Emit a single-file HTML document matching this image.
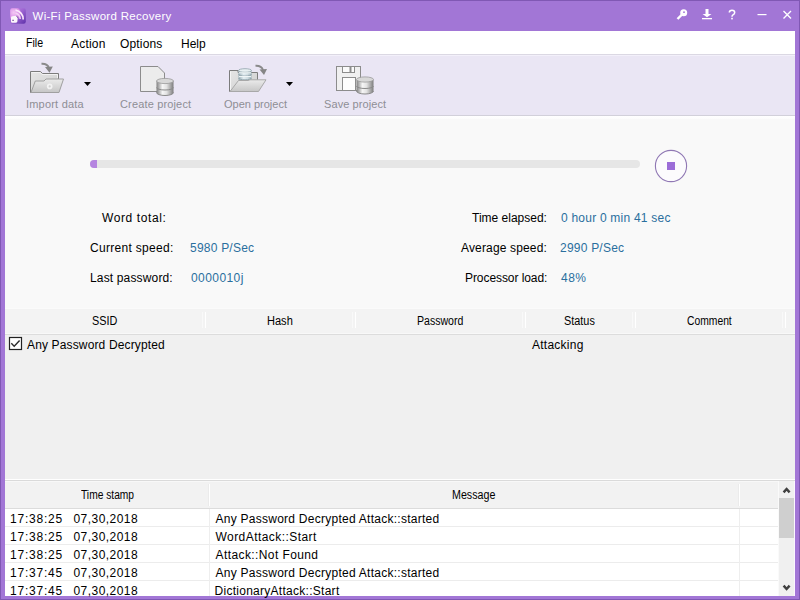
<!DOCTYPE html>
<html><head><meta charset="utf-8">
<style>
*{margin:0;padding:0;box-sizing:border-box}
html,body{width:800px;height:600px;overflow:hidden}
body{background:#a276d6;font-family:"Liberation Sans",sans-serif;font-size:12px;color:#000;position:relative}
.a{position:absolute}
.t{position:absolute;white-space:pre;line-height:14px}
</style></head><body>
<div class="a" style="left:0;top:0;width:800px;height:1px;background:#8058b4"></div>
<div class="a" style="left:0;top:0;width:1px;height:600px;background:#8058b4"></div>
<div class="a" style="left:799px;top:0;width:1px;height:600px;background:#8058b4"></div>
<div class="a" style="left:0;top:599px;width:800px;height:1px;background:#8058b4"></div>
<!-- menu -->
<div class="a" style="left:5px;top:31px;width:790px;height:23px;background:#fff"></div>
<div class="a" style="left:5px;top:54px;width:790px;height:1px;background:#dbd8e3"></div>
<!-- toolbar -->
<div class="a" style="left:5px;top:55px;width:790px;height:60px;background:#eae6f4"></div>
<div class="a" style="left:5px;top:55px;width:790px;height:1px;background:#f3f0fa"></div>
<div class="a" style="left:5px;top:115px;width:790px;height:1px;background:#d2d0da"></div>
<!-- panel -->
<div class="a" style="left:5px;top:116px;width:790px;height:192px;background:#f9f9f9"></div>
<div class="a" style="left:5px;top:116px;width:790px;height:3px;background:linear-gradient(#fff,#fcfcfc)"></div>
<div class="a" style="left:90px;top:160px;width:550px;height:8px;border-radius:4px;background:#e6e6e6"></div>
<div class="a" style="left:90px;top:160px;width:7px;height:8px;border-radius:4px 0 0 4px;background:#b585e0"></div>
<!-- list -->
<div class="a" style="left:5px;top:308px;width:790px;height:26px;background:#f3f3f3"></div>
<div class="a" style="left:5px;top:308px;width:790px;height:1px;background:#fbfbfb"></div>
<div class="a" style="left:5px;top:333px;width:790px;height:1px;background:#f8f8f8"></div>
<div class="a" style="left:5px;top:334px;width:790px;height:1px;background:#dcdcdc"></div>
<div class="a" style="left:5px;top:335px;width:790px;height:145px;background:#f0f0f0"></div>
<div class="a" style="left:205px;top:312px;width:1px;height:16px;background:#fff"></div><div class="a" style="left:202px;top:312px;width:1px;height:16px;background:#f9f9f9"></div>
<div class="a" style="left:355px;top:312px;width:1px;height:16px;background:#fff"></div><div class="a" style="left:352px;top:312px;width:1px;height:16px;background:#f9f9f9"></div>
<div class="a" style="left:525px;top:312px;width:1px;height:16px;background:#fff"></div><div class="a" style="left:522px;top:312px;width:1px;height:16px;background:#f9f9f9"></div>
<div class="a" style="left:635px;top:312px;width:1px;height:16px;background:#fff"></div><div class="a" style="left:632px;top:312px;width:1px;height:16px;background:#f9f9f9"></div>
<div class="a" style="left:785px;top:312px;width:1px;height:16px;background:#fff"></div><div class="a" style="left:782px;top:312px;width:1px;height:16px;background:#f9f9f9"></div>
<!-- log -->
<div class="a" style="left:5px;top:479px;width:790px;height:1px;background:#fff"></div>
<div class="a" style="left:5px;top:480px;width:790px;height:1px;background:#dadada"></div>
<div class="a" style="left:5px;top:481px;width:774px;height:27px;background:#f2f2f2"></div>
<div class="a" style="left:5px;top:481px;width:774px;height:1px;background:#f8f8f8"></div>
<div class="a" style="left:5px;top:508px;width:774px;height:1px;background:#dcdcdc"></div>
<div class="a" style="left:5px;top:509px;width:774px;height:87px;background:#fff"></div>
<div class="a" style="left:5px;top:526px;width:774px;height:1px;background:#ececec"></div>
<div class="a" style="left:5px;top:544px;width:774px;height:1px;background:#ececec"></div>
<div class="a" style="left:5px;top:562px;width:774px;height:1px;background:#ececec"></div>
<div class="a" style="left:5px;top:580px;width:774px;height:1px;background:#ececec"></div>
<div class="a" style="left:209px;top:484px;width:1px;height:22px;background:#fff"></div>
<div class="a" style="left:208px;top:484px;width:1px;height:22px;background:#ebebeb"></div>
<div class="a" style="left:209px;top:509px;width:1px;height:87px;background:#eeeeee"></div>
<div class="a" style="left:739px;top:484px;width:1px;height:22px;background:#fff"></div>
<div class="a" style="left:738px;top:484px;width:1px;height:22px;background:#ebebeb"></div>
<div class="a" style="left:739px;top:509px;width:1px;height:87px;background:#eeeeee"></div>
<div class="a" style="left:779px;top:481px;width:15px;height:115px;background:#f0f0f0"></div>
<div class="a" style="left:794px;top:481px;width:1px;height:115px;background:#fbf6ff"></div>
<div class="a" style="left:778px;top:481px;width:1px;height:115px;background:#fafafa"></div>
<div class="a" style="left:779px;top:498px;width:15px;height:40px;background:#cfcfcf"></div>
<svg class="a" style="left:0;top:0" width="800" height="600" viewBox="0 0 800 600">
<defs>
<linearGradient id="ig2" x1="0" y1="0" x2="1" y2="1"><stop offset="0" stop-color="#c890e8"/><stop offset="0.5" stop-color="#9a62d0"/><stop offset="1" stop-color="#5c30a8"/></linearGradient><radialGradient id="ig3" cx="0.45" cy="0.4" r="0.6"><stop offset="0" stop-color="#f4c8f4"/><stop offset="0.7" stop-color="#d88ee6"/><stop offset="1" stop-color="#b070d8" stop-opacity="0"/></radialGradient>
<linearGradient id="fb" x1="0" y1="0" x2="1" y2="1"><stop offset="0" stop-color="#e6e6e6"/><stop offset="1" stop-color="#cdcdcd"/></linearGradient>
<linearGradient id="ff" x1="0" y1="0" x2="0" y2="1"><stop offset="0" stop-color="#ebebeb"/><stop offset="1" stop-color="#c6c6c6"/></linearGradient>
<linearGradient id="db" x1="0" y1="0" x2="1" y2="0"><stop offset="0" stop-color="#808080"/><stop offset="0.35" stop-color="#f6f6f6"/><stop offset="0.6" stop-color="#e2e2e2"/><stop offset="1" stop-color="#7c7c7c"/></linearGradient>
<linearGradient id="dbb" x1="0" y1="0" x2="1" y2="0"><stop offset="0" stop-color="#9cb0b8"/><stop offset="0.4" stop-color="#e4eef2"/><stop offset="0.7" stop-color="#d0dde2"/><stop offset="1" stop-color="#9cb0b8"/></linearGradient>
</defs>
<!-- app icon -->
<clipPath id="icl"><rect x="10.2" y="8.2" width="15.6" height="15.6" rx="2.2"/></clipPath>
<g clip-path="url(#icl)">
<rect x="10" y="8" width="16" height="16" fill="url(#ig2)"/>
<circle cx="14.5" cy="14" r="7" fill="url(#ig3)"/>
<path d="M15.5 10.2 A9 9 0 0 1 23.2 19.5" stroke="#fbe8fb" stroke-width="1.7" fill="none"/>
<path d="M15.5 13.3 A6 6 0 0 1 20.2 19" stroke="#f4d2f4" stroke-width="1.5" fill="none"/>
<path d="M15.8 16.3 A3 3 0 0 1 17.5 17.8" stroke="#3a1a6a" stroke-width="1.3" fill="none"/>
<path d="M11 17.5 Q11 16.2 12.5 16.2 L15.8 15.8 Q17.6 16.8 17.6 18.6 L17.4 21.6 Q17 22.8 15.5 22.8 L12.3 22.8 Q11 22.8 11 21.5 Z" fill="#fbf6fb"/>
<rect x="12.2" y="19.8" width="1.8" height="1" fill="#7a5a9a"/>
</g>
<!-- title buttons -->
<g fill="#fff" stroke="#fff">
<circle cx="683.7" cy="12.7" r="3.5" stroke="none"/>
<path d="M682 14.5 L677.5 19" stroke-width="2.4" fill="none"/>
<path d="M705.5 9 H708.5 V14 H711.5 L707 17.2 L702.5 14 H705.5 Z" stroke="none"/>
<rect x="702" y="18" width="10" height="1.3" stroke="none"/>
<rect x="757.5" y="14" width="9" height="1.2" stroke="none"/>
<path d="M783.5 11 L791 18.5 M791 11 L783.5 18.5" stroke-width="1.4" fill="none"/>
<path d="M729.3 12.5 Q729.5 10.3 732 10.3 Q734.7 10.3 734.7 12.6 Q734.7 14 733 14.9 Q732 15.5 732 16.8" stroke-width="1.5" fill="none"/>
<rect x="731.2" y="17.8" width="1.6" height="1.6" stroke="none"/>
</g>
<circle cx="684" cy="12.2" r="0.9" fill="#a276d6"/>
<!-- stop button -->
<circle cx="671" cy="166" r="15.6" fill="#fcfbfd" stroke="#9078b4" stroke-width="1.1"/>
<rect x="667" y="162" width="8" height="8" fill="#9c6dd8"/>
<!-- checkbox -->
<rect x="9.5" y="337.5" width="12" height="12" fill="#fff" stroke="#222" stroke-width="1.2"/>
<path d="M11.3 343.3 L14.2 346.2 L19.6 340.6" stroke="#2a2a2a" stroke-width="1.4" fill="none"/>
<!-- scrollbar arrows -->
<path d="M783.6 492.3 L786.6 489 L789.6 492.3" stroke="#404040" stroke-width="2.5" fill="none"/>
<path d="M783.6 585.7 L786.6 589 L789.6 585.7" stroke="#404040" stroke-width="2.5" fill="none"/>
<!-- import data -->
<path d="M30.5 71.5 H40.5 L42.5 73.5 H58.5 V92.5 H30.5 Z" fill="url(#fb)" stroke="#7c7c7c"/>
<path d="M31.5 72.5 H40 L42 74.5 H57.5 V78" fill="none" stroke="#f2f2f2" stroke-width="1"/>
<path d="M35.3 81 H44 L46 79 H63.5 L59 92.5 H31 Z" fill="url(#ff)" stroke="#a0a0a0"/>
<circle cx="49.7" cy="86.4" r="2.8" fill="#f2f2f2"/>
<circle cx="49.7" cy="86.4" r="1.1" fill="#cfcfcf"/>
<path d="M41.5 63.8 Q47.5 63.5 49 68" stroke="#8a8a8a" stroke-width="1.9" fill="none"/>
<path d="M45 67 L52.8 66.5 L49.5 72.8 Z" fill="#858585"/>
<path d="M84 82 H91 L87.5 86 Z" fill="#000"/>
<!-- create project -->
<path d="M140.5 66.5 H158 L164.5 73 V91.5 H140.5 Z" fill="#ececec" stroke="#8c8c8c"/>
<g id="dbs">
<path d="M156.5 81 V92.5 A8.5 3 0 0 0 173.5 92.5 V81 Z" fill="url(#db)"/>
<ellipse cx="165" cy="81" rx="8.5" ry="2.6" fill="#d8d8d8" stroke="#9a9a9a" stroke-width="0.8"/>
<path d="M156.5 87.5 A8.5 2.5 0 0 0 173.5 87.5" stroke="#8a8a8a" stroke-width="1" fill="none"/>
<path d="M156.5 92.5 A8.5 3 0 0 0 173.5 92.5" stroke="#8a8a8a" stroke-width="1" fill="none"/>
</g>
<!-- open project -->
<path d="M229.5 70.5 H238 V72.5 H257.5 V91.5 H229.5 Z" fill="url(#fb)" stroke="#7c7c7c"/>
<path d="M230.5 71.5 V90" stroke="#f4f4f4" fill="none"/>
<path d="M238.5 70.5 V80.5 A6.5 2 0 0 0 251.5 80.5 V70.5 Z" fill="url(#dbb)"/>
<ellipse cx="245" cy="70.5" rx="6.5" ry="1.8" fill="#e8f0f2" stroke="#8ea2aa" stroke-width="0.8"/>
<path d="M238.5 74.3 A6.5 1.8 0 0 0 251.5 74.3 M238.5 78 A6.5 1.8 0 0 0 251.5 78" stroke="#8ea2aa" stroke-width="0.9" fill="none"/>
<path d="M239 72.8 H251 M239 76.5 H251" stroke="#f6fbfc" stroke-width="0.9" fill="none"/>
<path d="M238.5 80.5 H248 L250 79.8 H266 L258.5 91.5 H230 Z" fill="url(#ff)" stroke="#a8a8a8"/>
<path d="M255.5 65.8 Q261.5 65.5 263 70" stroke="#8a8a8a" stroke-width="1.9" fill="none"/>
<path d="M259.5 69.5 L267 69 L264 75 Z" fill="#858585"/>
<path d="M286 82 H293 L289.5 86 Z" fill="#000"/>
<!-- save project -->
<rect x="336.5" y="66.5" width="24" height="24" fill="#f0f0f0" stroke="#8c8c8c"/>
<rect x="342.5" y="66.5" width="12" height="6" fill="#fafafa" stroke="#8c8c8c"/>
<rect x="349.5" y="67" width="2" height="5" fill="#8c8c8c"/>
<rect x="342.5" y="77.5" width="13" height="13" fill="#fdfdfd" stroke="#8c8c8c"/>
<use href="#dbs" x="200" y="-1.5"/>
</svg>

<div class="t" style="left:32.50px;top:9px;font-size:11.5px;letter-spacing:0.295px;color:#fff">Wi-Fi Password Recovery</div>
<div class="t" style="left:26.12px;top:36px;font-size:12px;transform:scaleX(0.8824);transform-origin:0 0;color:#000">File</div>
<div class="t" style="left:71.00px;top:37px;font-size:12px;letter-spacing:0.2px;color:#000">Action</div>
<div class="t" style="left:120.00px;top:37px;font-size:12px;letter-spacing:0.167px;color:#000">Options</div>
<div class="t" style="left:181.00px;top:37px;font-size:12px;letter-spacing:0.0px;color:#000">Help</div>
<div class="t" style="left:26.00px;top:97px;font-size:11px;letter-spacing:0.2px;color:#8e8e94">Import data</div>
<div class="t" style="left:120.00px;top:97px;font-size:11px;letter-spacing:0.154px;color:#8e8e94">Create project</div>
<div class="t" style="left:224.00px;top:97px;font-size:11px;letter-spacing:0.0px;color:#8e8e94">Open project</div>
<div class="t" style="left:324.00px;top:97px;font-size:11px;letter-spacing:0.091px;color:#8e8e94">Save project</div>
<div class="t" style="left:102.00px;top:211px;font-size:12px;letter-spacing:0.6px;color:#000">Word total:</div>
<div class="t" style="left:90.00px;top:241px;font-size:12px;letter-spacing:0.308px;color:#000">Current speed:</div>
<div class="t" style="left:190.00px;top:241px;font-size:12px;letter-spacing:0.222px;color:#2a6f9e">5980 P/Sec</div>
<div class="t" style="left:90.00px;top:271px;font-size:12px;letter-spacing:0.154px;color:#000">Last password:</div>
<div class="t" style="left:191.00px;top:271px;font-size:12px;letter-spacing:0.429px;color:#2a6f9e">0000010j</div>
<div class="t" style="left:472.00px;top:211px;font-size:12px;letter-spacing:0.0px;color:#000">Time elapsed:</div>
<div class="t" style="left:561.00px;top:211px;font-size:12px;letter-spacing:0.222px;color:#2a6f9e">0 hour 0 min 41 sec</div>
<div class="t" style="left:461.00px;top:241px;font-size:12px;letter-spacing:0.154px;color:#000">Average speed:</div>
<div class="t" style="left:560.00px;top:241px;font-size:12px;letter-spacing:0.222px;color:#2a6f9e">2990 P/Sec</div>
<div class="t" style="left:465.00px;top:271px;font-size:12px;letter-spacing:-0.071px;color:#000">Processor load:</div>
<div class="t" style="left:561.00px;top:271px;font-size:12px;letter-spacing:0.5px;color:#2a6f9e">48%</div>
<div class="t" style="left:91.60px;top:314px;font-size:12px;transform:scaleX(0.9038);transform-origin:0 0;color:#000">SSID</div>
<div class="t" style="left:267.08px;top:314px;font-size:12px;transform:scaleX(0.9200);transform-origin:0 0;color:#000">Hash</div>
<div class="t" style="left:417.12px;top:314px;font-size:12px;transform:scaleX(0.8800);transform-origin:0 0;color:#000">Password</div>
<div class="t" style="left:564.09px;top:314px;font-size:12px;transform:scaleX(0.9062);transform-origin:0 0;color:#000">Status</div>
<div class="t" style="left:687.14px;top:314px;font-size:12px;transform:scaleX(0.8600);transform-origin:0 0;color:#000">Comment</div>
<div class="t" style="left:27.00px;top:338px;font-size:12px;letter-spacing:0.143px;color:#000">Any Password Decrypted</div>
<div class="t" style="left:532.00px;top:338px;font-size:12px;letter-spacing:0.25px;color:#000">Attacking</div>
<div class="t" style="left:81.00px;top:488px;font-size:12px;transform:scaleX(0.8525);transform-origin:0 0;color:#000">Time stamp</div>
<div class="t" style="left:452.11px;top:488px;font-size:12px;transform:scaleX(0.8913);transform-origin:0 0;color:#000">Message</div>
<div class="t" style="left:10.00px;top:512px;font-size:12px;letter-spacing:0.786px;color:#000">17:38:25</div>
<div class="t" style="left:73.50px;top:512px;font-size:12px;letter-spacing:0.444px;color:#000">07,30,2018</div>
<div class="t" style="left:215.50px;top:512px;font-size:12px;letter-spacing:0.257px;color:#000">Any Password Decrypted Attack::started</div>
<div class="t" style="left:10.00px;top:530px;font-size:12px;letter-spacing:0.786px;color:#000">17:38:25</div>
<div class="t" style="left:73.50px;top:530px;font-size:12px;letter-spacing:0.444px;color:#000">07,30,2018</div>
<div class="t" style="left:215.50px;top:530px;font-size:12px;letter-spacing:0.438px;color:#000">WordAttack::Start</div>
<div class="t" style="left:10.00px;top:548px;font-size:12px;letter-spacing:0.786px;color:#000">17:38:25</div>
<div class="t" style="left:73.50px;top:548px;font-size:12px;letter-spacing:0.444px;color:#000">07,30,2018</div>
<div class="t" style="left:215.50px;top:548px;font-size:12px;letter-spacing:0.406px;color:#000">Attack::Not Found</div>
<div class="t" style="left:10.00px;top:566px;font-size:12px;letter-spacing:0.786px;color:#000">17:37:45</div>
<div class="t" style="left:73.50px;top:566px;font-size:12px;letter-spacing:0.444px;color:#000">07,30,2018</div>
<div class="t" style="left:215.50px;top:566px;font-size:12px;letter-spacing:0.257px;color:#000">Any Password Decrypted Attack::started</div>
<div class="t" style="left:10.00px;top:584px;font-size:12px;letter-spacing:0.786px;color:#000">17:37:45</div>
<div class="t" style="left:73.50px;top:584px;font-size:12px;letter-spacing:0.444px;color:#000">07,30,2018</div>
<div class="t" style="left:214.50px;top:584px;font-size:12px;letter-spacing:0.273px;color:#000">DictionaryAttack::Start</div>
</body></html>
